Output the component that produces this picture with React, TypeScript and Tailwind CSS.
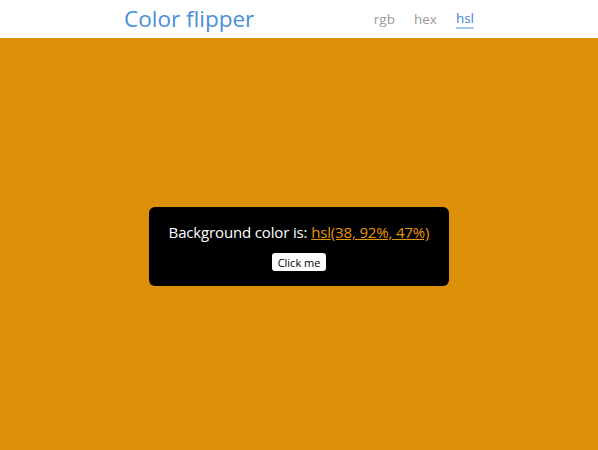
import React from "react";

export default function App() {
  return (
    <div className="w-[598px] h-[450px] flex flex-col overflow-hidden" style={{ fontFamily: '"Open Sans", "Liberation Sans", sans-serif' }}>
      <nav className="h-[38px] bg-white shrink-0">
        <div className="w-[350px] mx-auto h-full flex items-center justify-between">
          <h1 className="text-[22.5px] leading-none text-[#4a8edb] font-medium">Color flipper</h1>
          <ul className="flex items-center gap-[19px] text-[13.5px] text-[#9a9a9a] pt-[1px]">
            <li>rgb</li>
            <li>hex</li>
            <li className="text-[#3f86d8] border-b-2 border-[#a9c9ee] leading-[17px]">hsl</li>
          </ul>
        </div>
      </nav>
      <main className="flex-1 bg-[hsl(38,92%,45%)] flex items-center justify-center">
        <div className="w-[300px] h-[79px] bg-black rounded-[6px] flex flex-col items-center justify-center gap-[11px] mt-[5px]">
          <p className="text-white text-[15px] leading-[20px] tracking-[-0.15px]">
            Background color is: <span className="text-[hsl(38,92%,47%)] underline">hsl(38, 92%, 47%)</span>
          </p>
          <button className="bg-white text-black text-[11px] px-[6px] h-[18px] rounded-[3px] leading-none">Click me</button>
        </div>
      </main>
    </div>
  );
}
